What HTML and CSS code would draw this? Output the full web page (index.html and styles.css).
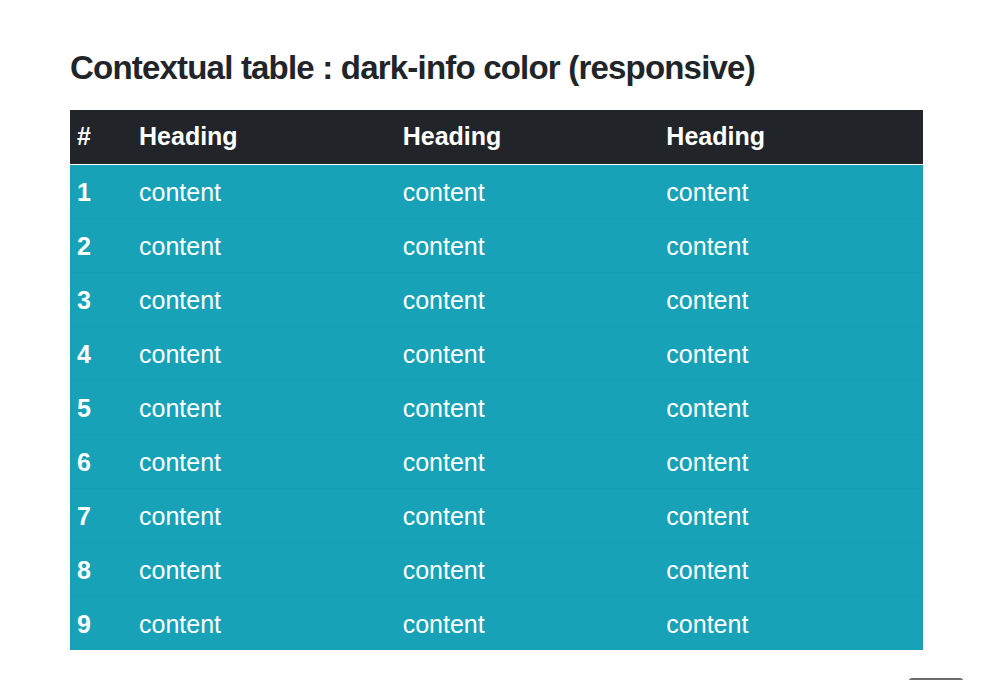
FILE: index.html
```html
<!DOCTYPE html>
<html lang="en">
<head>
<meta charset="utf-8">
<title>Contextual table</title>
<link rel="stylesheet" href="styles.css">
</head>
<body>
<main class="page">
  <h2 class="title">Contextual table : dark-info color (responsive)</h2>
  <div class="table-wrap">
    <table class="table">
      <colgroup>
        <col class="c-num"><col class="c-col"><col class="c-col"><col class="c-col">
      </colgroup>
      <thead>
        <tr><th>#</th><th>Heading</th><th>Heading</th><th>Heading</th></tr>
      </thead>
      <tbody>
        <tr><th>1</th><td>content</td><td>content</td><td>content</td></tr>
        <tr><th>2</th><td>content</td><td>content</td><td>content</td></tr>
        <tr><th>3</th><td>content</td><td>content</td><td>content</td></tr>
        <tr><th>4</th><td>content</td><td>content</td><td>content</td></tr>
        <tr><th>5</th><td>content</td><td>content</td><td>content</td></tr>
        <tr><th>6</th><td>content</td><td>content</td><td>content</td></tr>
        <tr><th>7</th><td>content</td><td>content</td><td>content</td></tr>
        <tr><th>8</th><td>content</td><td>content</td><td>content</td></tr>
        <tr><th>9</th><td>content</td><td>content</td><td>content</td></tr>
      </tbody>
    </table>
  </div>
</main>
<div class="to-top"></div>
</body>
</html>
```
FILE: styles.css
```css
html, body {
  margin: 0;
  padding: 0;
  background: #fff;
  height: 680px;
  overflow: hidden;
}
body {
  font-family: "Liberation Sans", Arial, sans-serif;
  color: #212529;
}
.page {
  padding: 48px 77px 0 70px;
}
.title {
  margin: 0 0 22px 0;
  font-size: 33px;
  line-height: 40px;
  font-weight: 700;
  letter-spacing: -0.8px;
}
.table-wrap {
  width: 853px;
}
.table {
  width: 853px;
  border-collapse: collapse;
  table-layout: fixed;
  font-size: 25px;
  color: #fff;
}
.c-num { width: 62px; }
.c-col { width: 263.6px; }
.table th, .table td {
  text-align: left;
  padding: 9px 8px 8px 7px;
  line-height: 36px;
  vertical-align: top;
}
.table thead th {
  background: #212529;
  font-weight: 700;
  padding: 8px 8px 10px 7px;
  border-bottom: 1px solid #fff;
}
.table tbody tr {
  background: #17a2b8;
  border-top: 1px solid #169fb4;
}
.table tbody tr:first-child {
  border-top: 0;
}
.table tbody th {
  font-weight: 700;
}
.to-top {
  position: fixed;
  left: 909px;
  top: 678px;
  width: 54px;
  height: 6px;
  border-radius: 3px;
  background: #6c6c6c;
}
```
